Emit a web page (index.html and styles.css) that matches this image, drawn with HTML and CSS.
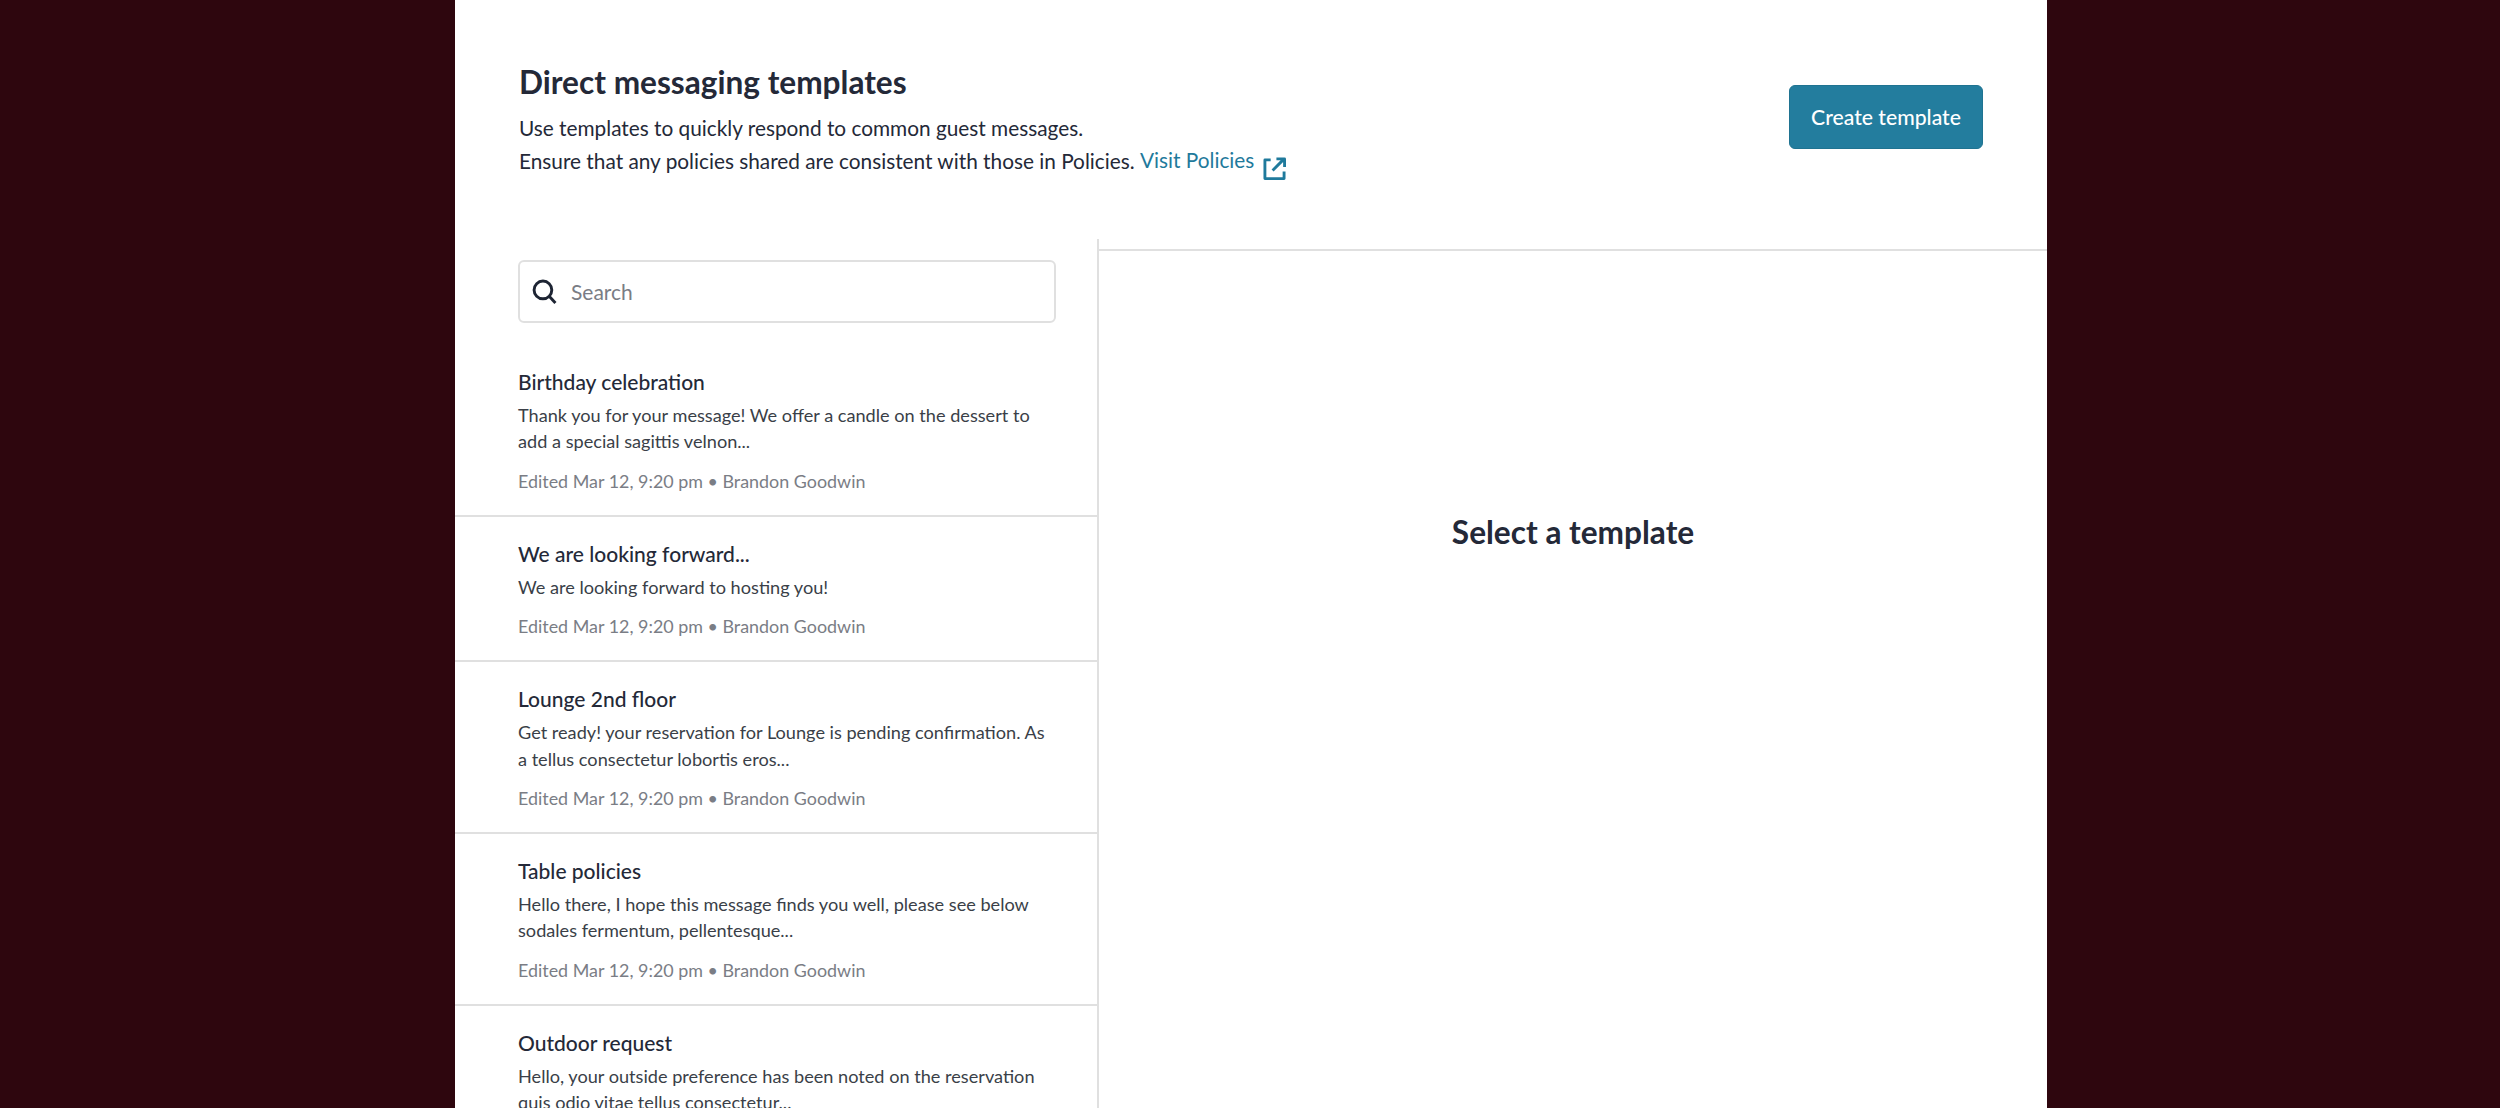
FILE: index.html
```html
<!DOCTYPE html>
<html lang="en">
<head>
  <meta charset="UTF-8" />
  <title>Direct messaging templates</title>
  <link rel="stylesheet" href="styles.css">
</head>
<body>
  <main class="panel">
    <header class="page-header">
      <div class="intro">
        <h1>Direct messaging templates</h1>
        <p>Use templates to quickly respond to common guest messages.</p>
        <p>Ensure that any policies shared are consistent with those in Policies.
          <a href="#">Visit Policies</a>
          <svg class="ext-icon" viewBox="0 0 24 24" fill="none" stroke="#1f7a9c" stroke-width="3" stroke-linejoin="round">
            <path d="M8 3H2v19.500h20V15" />
            <path d="M10 14 21 3M14 2h8.500v8.500" />
          </svg>
        </p>
      </div>
      <button class="create-btn">Create template</button>
    </header>

    <div class="columns">
      <section class="list-col">
        <div class="search">
          <svg class="search-icon" viewBox="0 0 24 24" fill="none" stroke="#1d2433" stroke-width="2.8">
            <circle cx="10.500" cy="10.500" r="8.500" />
            <path d="m16.500 16.500 6 6.500" />
          </svg>
          <span>Search</span>
        </div>

        <div class="item item-first">
          <h3>Birthday celebration</h3>
          <p>Thank you for your message! We offer a candle on the dessert to add a special sagittis velnon...</p>
          <div class="meta">Edited Mar 12, 9:20 pm • Brandon Goodwin</div>
        </div>
        <div class="item">
          <h3>We are looking forward...</h3>
          <p>We are looking forward to hosting you!</p>
          <div class="meta">Edited Mar 12, 9:20 pm • Brandon Goodwin</div>
        </div>
        <div class="item">
          <h3>Lounge 2nd floor</h3>
          <p>Get ready! your reservation for Lounge is pending confirmation. As a tellus consectetur lobortis eros...</p>
          <div class="meta">Edited Mar 12, 9:20 pm • Brandon Goodwin</div>
        </div>
        <div class="item">
          <h3>Table policies</h3>
          <p>Hello there, I hope this message finds you well, please see below sodales fermentum, pellentesque...</p>
          <div class="meta">Edited Mar 12, 9:20 pm • Brandon Goodwin</div>
        </div>
        <div class="item">
          <h3>Outdoor request</h3>
          <p>Hello, your outside preference has been noted on the reservation quis odio vitae tellus consectetur...</p>
        </div>
      </section>

      <section class="detail-col">
        <div class="detail-inner">
          <h2>Select a template</h2>
        </div>
      </section>
    </div>
  </main>
</body>
</html>
```

FILE: styles.css
```css
html, body {
  height: 100%;
  margin: 0;
}
body {
  background-color: #2e060e;
  font-family: 'Lato', sans-serif;
  color: #242938;
  overflow: hidden;
}
h1, h2, h3, p {
  margin: 0;
}
.panel {
  width: 1592px;
  height: 1108px;
  margin: 0 0 0 455px;
  background-color: #fff;
  overflow: hidden;
}
.page-header {
  height: 239px;
  box-sizing: border-box;
  padding: 60px 64px 0;
  display: flex;
  justify-content: space-between;
  align-items: flex-start;
}
h1 {
  font-size: 31.6px;
  line-height: 44px;
  font-weight: 700;
  margin-bottom: 8px;
}
.intro p {
  font-size: 20.8px;
  line-height: 32px;
  height: 32px;
}
.intro a {
  color: #1f7a9c;
  text-decoration: none;
  vertical-align: 1px;
}
.ext-icon {
  width: 23px;
  height: 23px;
  margin-left: 3px;
  vertical-align: -11px;
}
.create-btn {
  width: 194px;
  height: 64px;
  margin-top: 25px;
  padding-bottom: 2px;
  background-color: #237d9e;
  border: 1px solid #1f7391;
  border-radius: 6px;
  color: #fff;
  font-family: inherit;
  font-size: 21.2px;
  font-weight: 500;
}
.columns {
  display: flex;
  height: 869px;
}
.list-col {
  width: 644px;
  box-sizing: border-box;
  border-right: 2px solid #e0e0e0;
  padding-top: 21px;
}
.search {
  margin: 0 41px 0 63px;
  height: 63px;
  box-sizing: border-box;
  border: 2px solid #e0e0e0;
  border-radius: 6px;
  display: flex;
  align-items: center;
  padding-left: 12px;
  gap: 14px;
  font-size: 21px;
  color: #7a7d85;
}
.search-icon {
  width: 25px;
  height: 25px;
}
.item {
  padding: 22px 42px 21px 63px;
  border-bottom: 2px solid #e0e0e0;
}
.item-first {
  padding-top: 44px;
}
.item h3 {
  font-size: 21px;
  line-height: 30px;
  font-weight: 500;
  margin-bottom: 5px;
}
.item p {
  font-size: 18.15px;
  line-height: 26.4px;
  color: #3a3f48;
}
.meta {
  font-size: 17.9px;
  line-height: 26px;
  color: #7a7d85;
  margin-top: 13px;
}
.detail-col {
  flex: 1;
  padding-top: 10px;
}
.detail-inner {
  border-top: 2px solid #e0e0e0;
  text-align: center;
  padding-top: 259px;
}
h2 {
  font-size: 31.6px;
  line-height: 44px;
  font-weight: 700;
}
```
